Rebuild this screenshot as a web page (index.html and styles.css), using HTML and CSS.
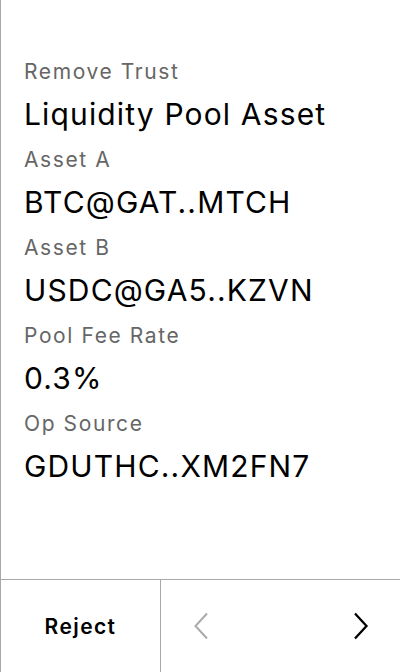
FILE: index.html
```html
<!DOCTYPE html>
<html>
<head>
<meta charset="utf-8">
<link rel="stylesheet" href="styles.css">
</head>
<body>
<div class="screen">
  <div class="content">
    <div class="label">Remove Trust</div>
    <div class="value">Liquidity Pool Asset</div>
    <div class="label">Asset A</div>
    <div class="value">BTC@GAT..MTCH</div>
    <div class="label">Asset B</div>
    <div class="value">USDC@GA5..KZVN</div>
    <div class="label">Pool Fee Rate</div>
    <div class="value">0.3%</div>
    <div class="label">Op Source</div>
    <div class="value">GDUTHC..XM2FN7</div>
  </div>
  <div class="footer">
    <div class="reject">Reject</div>
    <div class="nav">
      <svg class="chev" width="16" height="28" viewBox="0 0 16 28"><path d="M14 1.5 L2.5 14 L14 26.5" fill="none" stroke="#aaaaaa" stroke-width="2"/></svg>
      <svg class="chev" width="16" height="28" viewBox="0 0 16 28"><path d="M2 1.5 L13.5 14 L2 26.5" fill="none" stroke="#000" stroke-width="2.3"/></svg>
    </div>
  </div>
</div>
</body>
</html>
```
FILE: styles.css
```css
html, body {
  margin: 0;
  padding: 0;
  background: #fff;
}
.screen {
  width: 400px;
  height: 672px;
  box-sizing: border-box;
  border-left: 1px solid #a8a8a8;
  display: flex;
  flex-direction: column;
  font-family: Inter, "Noto Sans", sans-serif;
}
.content {
  flex: 1;
  padding: 56px 23px 0;
}
.label {
  font-size: 21px;
  line-height: 32px;
  color: #666;
  letter-spacing: 1.6px;
}
.value {
  font-size: 30px;
  line-height: 52px;
  padding-bottom: 4px;
  color: #000;
  letter-spacing: 1.15px;
}
.footer {
  height: 92px;
  border-top: 1px solid #a8a8a8;
  display: flex;
}
.reject {
  width: 159px;
  border-right: 1px solid #a8a8a8;
  display: flex;
  align-items: center;
  justify-content: center;
  font-size: 21px;
  font-weight: 600;
  color: #000;
  letter-spacing: 1.4px;
}
.nav {
  flex: 1;
  display: flex;
  align-items: center;
  justify-content: space-between;
  padding: 0 31px 0 32px;
}
```
